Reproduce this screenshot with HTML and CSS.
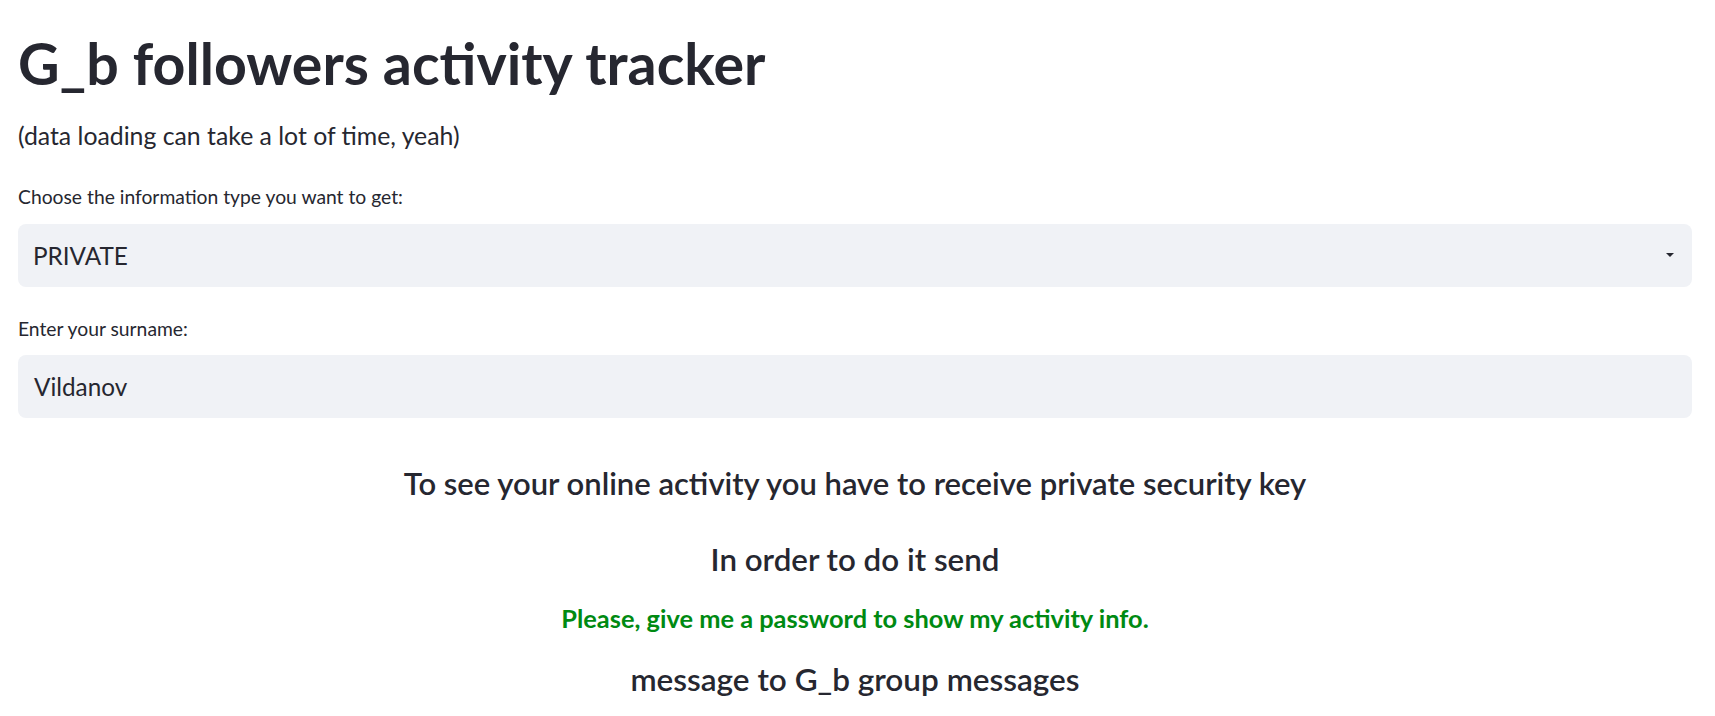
FILE: index.html
```html
<!DOCTYPE html>
<html lang="en">
<head>
<meta charset="utf-8">
<title>G_b followers activity tracker</title>
<link rel="stylesheet" href="styles.css">
</head>
<body>
<main class="app">
  <h1 class="title">G_b followers activity tracker</h1>
  <p class="subtitle">(data loading can take a lot of time, yeah)</p>

  <label class="field-label label-first">Choose the information type you want to get:</label>
  <div class="select">
    <span class="field-value">PRIVATE</span>
    <svg class="caret" width="8" height="4" viewBox="0 0 8 4"><path d="M0 0H8L4 4Z" fill="#262730"/></svg>
  </div>

  <label class="field-label label-second">Enter your surname:</label>
  <div class="input">
    <span class="field-value value-input">Vildanov</span>
  </div>

  <h3 class="heading h-first">To see your online activity you have to receive private security key</h3>
  <h3 class="heading h-second">In order to do it send</h3>
  <p class="green">Please, give me a password to show my activity info.</p>
  <h3 class="heading h-last">message to G_b group messages</h3>
</main>
</body>
</html>
```

FILE: styles.css
```css
html, body {
  margin: 0;
  padding: 0;
  background: #ffffff;
}

body {
  font-family: Lato, "Noto Sans", sans-serif;
  color: #262730;
  line-height: 1.2;
}

.app {
  width: 1674px;
  padding: 29px 0 0 18px;
  display: flex;
  flex-direction: column;
}

.title {
  margin: 0;
  font-size: 57.3px;
  font-weight: 700;
  line-height: 1.2;
}

.subtitle {
  margin: 23px 0 0;
  font-size: 24.8px;
  font-weight: 400;
}

.field-label {
  display: block;
  font-size: 19.3px;
  font-weight: 400;
}

.label-first {
  margin-top: 34px;
}

.label-second {
  margin-top: 30px;
}

.select,
.input {
  margin-top: 16px;
  height: 63px;
  background: #f0f2f6;
  border-radius: 8px;
  display: flex;
  align-items: center;
  justify-content: space-between;
  padding: 0 18px 0 15px;
  box-sizing: border-box;
}

.input {
  margin-top: 15px;
}

.field-value {
  font-size: 24.3px;
}

.value-input {
  padding-left: 1px;
}

.caret {
  display: block;
}

.heading {
  margin: 0;
  text-align: center;
  font-size: 31px;
  font-weight: 600;
}

.h-first {
  margin-top: 47px;
}

.heading.h-second {
  margin-top: 39px;
  font-size: 31.3px;
}

.green {
  margin: 24px 0 0;
  text-align: center;
  color: #008a12;
  font-size: 25.4px;
  font-weight: 700;
}

.heading.h-last {
  margin-top: 28px;
  font-size: 31.5px;
}
```
